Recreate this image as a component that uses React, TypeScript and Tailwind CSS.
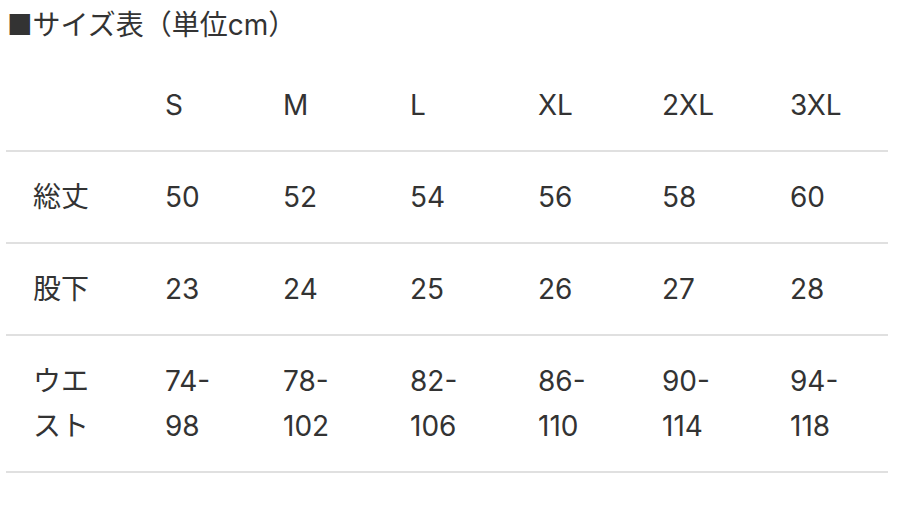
const sizes = ['S', 'M', 'L', 'XL', '2XL', '3XL'];

const rows: { label: string[]; values: string[] }[] = [
  { label: ['総丈'], values: ['50', '52', '54', '56', '58', '60'] },
  { label: ['股下'], values: ['23', '24', '25', '26', '27', '28'] },
  { label: ['ウエ', 'スト'], values: ['74-98', '78-102', '82-106', '86-110', '90-114', '94-118'] },
];

// column widths measured from the screenshot
const colWidths = ['w-[132px]', 'w-[118px]', 'w-[127px]', 'w-[128px]', 'w-[124px]', 'w-[128px]', 'w-[125px]'];

export default function App() {
  return (
    <div className="w-[924px] h-[512px] bg-white text-[#333] font-['Inter','Noto_Sans_CJK_JP',sans-serif] overflow-hidden">
      <h2 className="pl-[7px] pt-[5px] text-[28px] leading-[40px] font-normal">■サイズ表（単位cm）</h2>

      <table className="ml-[6px] mt-[15px] w-[882px] table-fixed border-collapse text-[28px] leading-[45px]">
        <colgroup>
          {colWidths.map((w, i) => (
            <col key={i} className={w} />
          ))}
        </colgroup>
        <thead>
          <tr className="border-b-2 border-[#e0e0e0]">
            <th className="h-[91px]"></th>
            {sizes.map(s => (
              <th key={s} className="pl-[27px] text-left font-normal align-middle">
                {s}
              </th>
            ))}
          </tr>
        </thead>
        <tbody>
          {rows.map(row => (
            <tr key={row.label.join('')} className="border-b-2 border-[#e0e0e0]">
              <td className="pl-[27px] py-[22.5px] align-middle">
                {row.label.map((part, i) => (
                  <div key={i}>{part}</div>
                ))}
              </td>
              {row.values.map(v => (
                <td key={v} className="pl-[27px] pr-[30px] py-[22.5px] align-middle">
                  {v}
                </td>
              ))}
            </tr>
          ))}
        </tbody>
      </table>
    </div>
  );
}
